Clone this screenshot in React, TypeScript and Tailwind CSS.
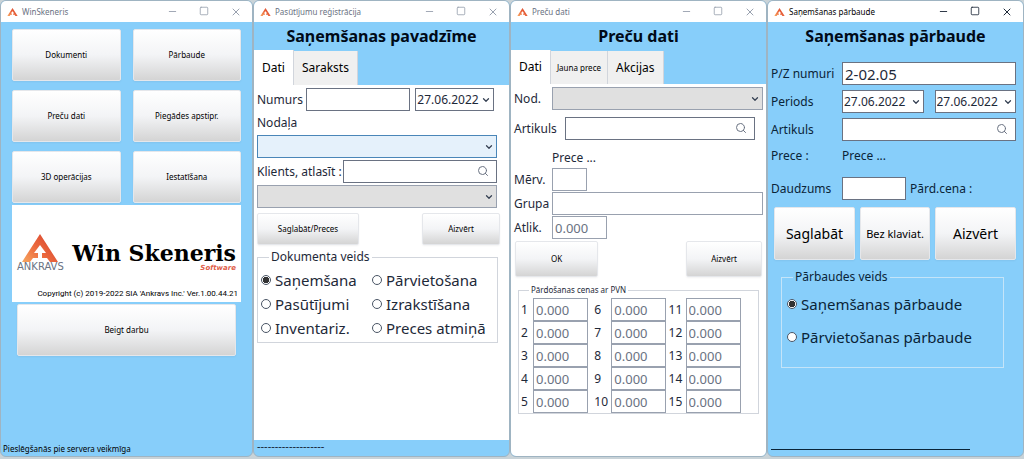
import { useId, useState } from "react";
import type { ReactNode } from "react";
import { ChevronDown, Minus, Search, Square, X } from "lucide-react";
import clsx from "clsx";

const box = "h-[23px] min-w-0 border px-[2px] leading-5 outline-none";
const field = clsx(box, "border-gray-500 bg-white text-[15px] text-gray-800");
const numberField = clsx(box, "w-[55px] border-gray-400 bg-white text-[13px] text-gray-500");
const gradientButton =
    "rounded-[2px] border border-gray-200 bg-gradient-to-b from-white via-gray-100 to-[#d4d4d4] text-center text-black shadow-xs";

const prices = [
    [1, 6, 11],
    [2, 7, 12],
    [3, 8, 13],
    [4, 9, 14],
    [5, 10, 15],
];

function Mark({ className }: { className?: string }) {
    const id = useId();
    return (
        <svg viewBox="0 0 36 28" className={className} aria-hidden="true">
            <defs>
                <linearGradient id={id} x1="0" y1="1" x2="1" y2="0.3">
                    <stop offset="0" stopColor="#f7a760" />
                    <stop offset="0.5" stopColor="#ec6a3e" />
                    <stop offset="1" stopColor="#d8452f" />
                </linearGradient>
            </defs>
            <path fill={`url(#${id})`} d="M18 0 36 28H28L25 24H20V19H24L18 11 12 19H16V24H11L8 28H0Z" />
        </svg>
    );
}

function Window({ title, active, children }: { title: string; active?: boolean; children: ReactNode }) {
    return (
        <section className="flex min-w-0 flex-col overflow-hidden rounded-md border border-[#9fb4c2] bg-[#87cefa]">
            <header className="flex h-[21px] shrink-0 items-center bg-white pl-[6px]">
                <Mark className="h-2 w-[11px]" />
                <span className={clsx("ml-1 flex-1 text-[8px] whitespace-nowrap", active ? "text-black" : "text-gray-500")}>
                    {title}
                </span>
                <div className={clsx("flex", active ? "text-gray-800" : "text-gray-400")}>
                    <button aria-label="Minimizēt" className="flex w-8 justify-center">
                        <Minus className="size-[11px]" strokeWidth={2} />
                    </button>
                    <button aria-label="Maksimizēt" className="flex w-8 justify-center">
                        <Square className="size-[10px]" strokeWidth={2} />
                    </button>
                    <button aria-label="Aizvērt logu" className="flex w-8 justify-center">
                        <X className="size-3" strokeWidth={2} />
                    </button>
                </div>
            </header>
            {children}
        </section>
    );
}

function Heading({ children }: { children: ReactNode }) {
    return <h1 className="h-7 shrink-0 text-center text-[16px] leading-7 font-bold text-[#000a18]">{children}</h1>;
}

function Tab({ selected, small, children }: { selected?: boolean; small?: boolean; children: ReactNode }) {
    return (
        <button
            role="tab"
            aria-selected={!!selected}
            className={clsx(
                "border-r border-gray-300 text-black",
                selected ? "bg-white" : "mt-px bg-[#f0f0f0]",
                small ? "px-[6px] text-[8px]" : "px-2 text-[12px]"
            )}
        >
            {children}
        </button>
    );
}

function Combo({ label, value = "", className }: { label: string; value?: string; className?: string }) {
    return (
        <div className="relative flex min-w-0 flex-1">
            <select
                aria-label={label}
                defaultValue={value}
                className={clsx("h-[23px] w-full min-w-0 appearance-none border px-px text-[12px] leading-5 text-gray-800 outline-none", className)}
            >
                <option value={value}>{value}</option>
            </select>
            <ChevronDown className="pointer-events-none absolute top-[7px] right-[3px] size-[10px] text-gray-700" strokeWidth={3} />
        </div>
    );
}

function SearchBox({ id }: { id: string }) {
    return (
        <div className="relative flex min-w-0 flex-1">
            <input id={id} type="text" className={clsx(field, "w-full pr-6")} />
            <button aria-label="Meklēt" className="absolute top-[5px] right-2">
                <Search className="size-3 text-gray-500" strokeWidth={2} />
            </button>
        </div>
    );
}

function Radio({ name, label, checked, onSelect }: { name: string; label: string; checked: boolean; onSelect: () => void }) {
    return (
        <label className="flex items-center gap-1 text-[15px] leading-5 whitespace-nowrap">
            <input
                type="radio"
                name={name}
                checked={checked}
                onChange={onSelect}
                className="size-[10px] shrink-0 appearance-none rounded-full border border-gray-600 bg-white checked:bg-[radial-gradient(circle,#333_0_3px,#fff_3px)]"
            />
            {label}
        </label>
    );
}

function MainWindow() {
    const items = ["Dokumenti", "Pārbaude", "Preču dati", "Piegādes apstipr.", "3D operācijas", "Iestatīšana"];
    return (
        <Window title="WinSkeneris">
            <div className="px-[11px] pt-[7px]">
                <div className="grid grid-cols-2 gap-x-3 gap-y-[9px]">
                    {items.map((item) => (
                        <button key={item} className={clsx(gradientButton, "h-[52px] text-[8px]")}>
                            {item}
                        </button>
                    ))}
                </div>
                <div className="mt-[2px] flex h-[97px] flex-col bg-white">
                    <div className="flex flex-1 items-end px-[5px]">
                        <div className="flex flex-col items-center">
                            <Mark className="h-7 w-9" />
                            <span className="font-['DejaVu_Sans'] text-[10px] leading-[10px] text-gray-500">ANKRAVS</span>
                        </div>
                        <div className="flex flex-1 flex-col items-end">
                            <span className="font-['DejaVu_Serif'] text-[22px] leading-[22px] font-bold whitespace-nowrap text-black">
                                Win Skeneris
                            </span>
                            <span className="font-['DejaVu_Sans'] text-[7px] leading-[8px] font-bold text-[#e0604a] italic">Software</span>
                        </div>
                    </div>
                    <p className="mt-4 pr-[3px] pb-[2px] text-right font-[Roboto] text-[8px] leading-3 whitespace-nowrap text-black">
                        Copyright (c) 2019-2022 SIA 'Ankravs Inc.' Ver.1.00.44.21
                    </p>
                </div>
                <div className="mt-[2px] px-[5px]">
                    <button className={clsx(gradientButton, "h-[52px] w-full text-[8px]")}>Beigt darbu</button>
                </div>
            </div>
            <p className="mt-auto px-[2px] pb-px text-[8px] leading-3 text-black">Pieslēgšanās pie servera veikmīga</p>
        </Window>
    );
}

function InvoiceWindow() {
    const kinds = ["Saņemšana", "Pārvietošana", "Pasūtījumi", "Izrakstīšana", "Inventariz.", "Preces atmiņā"];
    const [kind, setKind] = useState(kinds[0]);
    return (
        <Window title="Pasūtījumu reģistrācija">
            <Heading>Saņemšanas pavadzīme</Heading>
            <div role="tablist" className="flex h-[35px] shrink-0">
                <Tab selected>Dati</Tab>
                <Tab>Saraksts</Tab>
            </div>
            <div className="flex-1 bg-white px-[3px] pt-[3px] text-[12px] leading-5 text-gray-800">
                <div className="flex items-center gap-[5px] pr-3">
                    <label htmlFor="numurs" className="w-11">
                        Numurs
                    </label>
                    <input id="numurs" type="text" className={clsx(field, "w-0 flex-[5]")} />
                    <div className="flex flex-[4]">
                        <Combo label="Datums" value="27.06.2022" className="border-gray-500 bg-white" />
                    </div>
                </div>
                <p className="my-[2px]">Nodaļa</p>
                <div className="flex pr-[9px]">
                    <Combo label="Nodaļa" className="border-[#4a86b8] bg-[#e5f1fb]" />
                </div>
                <div className="mt-[2px] flex items-center pr-[9px]">
                    <label htmlFor="klients" className="w-[86px] whitespace-nowrap">
                        Klients, atlasīt :
                    </label>
                    <SearchBox id="klients" />
                </div>
                <div className="mt-[2px] flex pr-[9px]">
                    <Combo label="Klients" className="border-gray-400 bg-[#e0e0e0]" />
                </div>
                <div className="mt-[5px] flex justify-between pr-[6px]">
                    <button className={clsx(gradientButton, "h-8 w-[102px] text-[8px]")}>Saglabāt/Preces</button>
                    <button className={clsx(gradientButton, "h-8 w-[78px] text-[8px]")}>Aizvērt</button>
                </div>
                <fieldset className="mt-[2px] mr-2 border border-gray-300 pb-1 pl-[3px]">
                    <legend className="ml-2 px-[2px]">Dokumenta veids</legend>
                    <div className="grid grid-cols-[111fr_125fr] gap-y-1 pt-[3px]">
                        {kinds.map((k) => (
                            <Radio key={k} name="kind" label={k} checked={kind === k} onSelect={() => setKind(k)} />
                        ))}
                    </div>
                </fieldset>
            </div>
            <footer className="h-4 shrink-0 px-[3px] text-[11px] leading-3 text-[#123]">-------------------</footer>
        </Window>
    );
}

function GoodsWindow() {
    return (
        <Window title="Preču dati">
            <Heading>Preču dati</Heading>
            <div role="tablist" className="flex h-[34px] shrink-0">
                <Tab selected>Dati</Tab>
                <Tab small>Jauna prece</Tab>
                <Tab>Akcijas</Tab>
            </div>
            <div className="flex-1 bg-white px-[3px] pt-[3px] text-[12px] leading-5 text-gray-800">
                <div className="flex items-center">
                    <span className="w-[38px]">Nod.</span>
                    <Combo label="Nod." className="border-gray-400 bg-[#e0e0e0]" />
                </div>
                <div className="mt-[7px] flex items-center pr-2">
                    <label htmlFor="prece-artikuls" className="w-[51px]">
                        Artikuls
                    </label>
                    <SearchBox id="prece-artikuls" />
                </div>
                <p className="mt-2 pl-[38px]">Prece ...</p>
                <div className="flex items-center">
                    <label htmlFor="merv" className="w-[38px]">
                        Mērv.
                    </label>
                    <input id="merv" type="text" className={clsx(box, "w-[35px] border-gray-400 bg-white")} />
                </div>
                <div className="mt-px flex items-center">
                    <label htmlFor="grupa" className="w-[38px]">
                        Grupa
                    </label>
                    <input id="grupa" type="text" className={clsx(box, "flex-1 border-gray-400 bg-white")} />
                </div>
                <div className="mt-px flex items-center">
                    <label htmlFor="atlik" className="w-[38px]">
                        Atlik.
                    </label>
                    <input id="atlik" type="text" defaultValue="0.000" className={numberField} />
                </div>
                <div className="mt-[2px] flex justify-between px-px">
                    <button className={clsx(gradientButton, "h-9 w-[83px] text-[8px]")}>OK</button>
                    <button className={clsx(gradientButton, "h-9 w-[76px] text-[8px]")}>Aizvērt</button>
                </div>
                <fieldset className="mt-[5px] mr-1 ml-1 border border-gray-300 pl-[2px]">
                    <legend className="ml-2 px-[2px] text-[8px] leading-4">Pārdošanas cenas ar PVN</legend>
                    <div className="grid grid-cols-[73fr_74fr_89fr]">
                        {prices.flat().map((n) => (
                            <label key={n} className="flex items-center">
                                <span className={clsx("whitespace-nowrap", n < 6 ? "w-3" : "w-[17px]")}>{n}</span>
                                <input type="text" defaultValue="0.000" className={numberField} />
                            </label>
                        ))}
                    </div>
                </fieldset>
            </div>
        </Window>
    );
}

function CheckWindow() {
    const kinds = ["Saņemšanas pārbaude", "Pārvietošanas pārbaude"];
    const [kind, setKind] = useState(kinds[0]);
    return (
        <Window title="Saņemšanas pārbaude" active>
            <Heading>Saņemšanas pārbaude</Heading>
            <div className="px-[3px] pt-3 text-[12px] leading-5 text-[#0a2438]">
                <div className="mr-1 grid grid-cols-[71px_1fr] items-center gap-y-[5px]">
                    <label htmlFor="pz">P/Z numuri</label>
                    <input id="pz" type="text" defaultValue="2-02.05" className={field} />
                    <span>Periods</span>
                    <div className="flex gap-[11px]">
                        <Combo label="Periods no" value="27.06.2022" className="border-gray-500 bg-white" />
                        <Combo label="Periods līdz" value="27.06.2022" className="border-gray-500 bg-white" />
                    </div>
                    <label htmlFor="artikuls">Artikuls</label>
                    <SearchBox id="artikuls" />
                    <span>Prece :</span>
                    <span>Prece ...</span>
                    <label htmlFor="daudzums" className="mt-[6px]">
                        Daudzums
                    </label>
                    <div className="mt-[6px] flex items-center gap-1">
                        <input id="daudzums" type="text" className={clsx(field, "w-16")} />
                        <span>Pārd.cena :</span>
                    </div>
                </div>
                <div className="mt-[7px] mr-1 ml-[3px] grid grid-cols-[81fr_70fr_81fr] gap-[5px]">
                    <button className={clsx(gradientButton, "h-[53px] text-[14px]")}>Saglabāt</button>
                    <button className={clsx(gradientButton, "h-[53px] text-[11px]")}>Bez klaviat.</button>
                    <button className={clsx(gradientButton, "h-[53px] text-[14px]")}>Aizvērt</button>
                </div>
                <fieldset className="mt-[7px] mr-4 ml-[10px] border border-[#c4e4f8] pb-5 pl-[5px]">
                    <legend className="ml-[6px] px-[2px]">Pārbaudes veids</legend>
                    <div className="flex flex-col gap-[13px] pt-[7px]">
                        {kinds.map((k) => (
                            <Radio key={k} name="check" label={k} checked={kind === k} onSelect={() => setKind(k)} />
                        ))}
                    </div>
                </fieldset>
            </div>
            <footer className="mt-auto px-[3px] pb-[6px]">
                <div className="w-4/5 border-b border-[#0a2438]" />
            </footer>
        </Window>
    );
}

export default function App() {
    return (
        <main className="grid min-h-screen grid-cols-[253fr_257fr_257fr_257fr] bg-[#c9d3d8] pb-[2px] font-['Noto_Sans',sans-serif]">
            <MainWindow />
            <InvoiceWindow />
            <GoodsWindow />
            <CheckWindow />
        </main>
    );
}
